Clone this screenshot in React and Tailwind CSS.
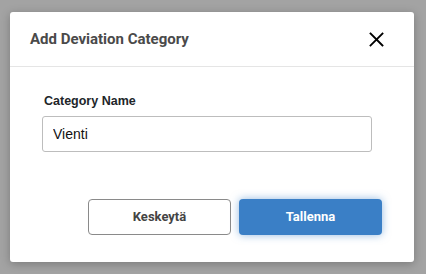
import React, { useState } from 'react';

const App = () => {
  const [name, setName] = useState('Vienti');

  return (
    <div className="w-[426px] h-[274px] bg-[#a3a3a3] pt-[12px] pl-[10px]" style={{ fontFamily: 'Roboto, sans-serif' }}>
      <div className="w-[404px] h-[250px] bg-white rounded-[3px] shadow-[0_2px_10px_rgba(0,0,0,0.25)] flex flex-col">
        <div className="h-[55px] flex items-center justify-between pl-[20px] pr-[30px] border-b border-[#e5e5e5]">
          <h3 className="text-[15px] font-bold text-[#4a4a4a] pt-[1px]">Add Deviation Category</h3>
          <button className="w-[16px] h-[16px] flex items-center justify-center text-black">
            <svg width="15" height="15" viewBox="0 0 15 15" fill="none" stroke="currentColor" strokeWidth="1.8" strokeLinecap="square">
              <path d="M1.5 1.5 L13.5 13.5 M13.5 1.5 L1.5 13.5" />
            </svg>
          </button>
        </div>
        <div className="pl-[32px] pr-[42px] pt-[25px]">
          <label className="block ml-[2px] text-[12.5px] font-bold text-[#212529] mb-[5px]" style={{ fontFamily: '"Liberation Sans", Arial, sans-serif' }}>
            Category Name
          </label>
          <input
            type="text"
            value={name}
            onChange={(e) => setName(e.target.value)}
            className="w-[330px] h-[36px] px-[10px] border border-[#bdbdbd] rounded-[3px] text-[14px] text-[#111] outline-none"
            style={{ fontFamily: '"Liberation Sans", Arial, sans-serif' }}
          />
        </div>
        <div className="flex gap-[8px] pl-[78px] mt-[47px]">
          <button className="w-[143px] h-[36px] border border-[#8a8a8a] rounded-[4px] bg-white text-[13px] font-bold text-[#444]">
            Keskeytä
          </button>
          <button className="w-[143px] h-[36px] rounded-[4px] bg-[#3a7fc6] text-[13px] font-bold text-white shadow-[0_0_8px_rgba(58,127,198,0.55)]">
            Tallenna
          </button>
        </div>
      </div>
    </div>
  );
};

export default App;
